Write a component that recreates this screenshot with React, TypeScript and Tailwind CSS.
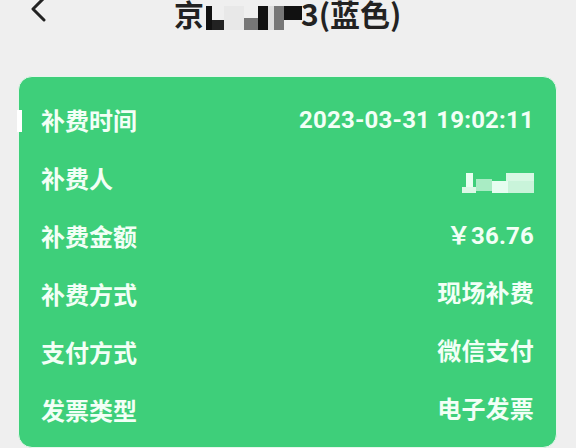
import React from 'react';

const rows: { label: string; value: React.ReactNode }[] = [
  { label: '补费时间', value: '2023-03-31 19:02:11' },
  { label: '补费人', value: null },
  { label: '补费金额', value: '￥36.76' },
  { label: '补费方式', value: '现场补费' },
  { label: '支付方式', value: '微信支付' },
  { label: '发票类型', value: '电子发票' },
];

// pixelated name mosaic in row 2
function NameMosaic() {
  return (
    <div className="flex items-end h-[30px]">
      <div className="flex flex-col items-start">
        <div className="w-[7px] h-[14px] bg-[#e8fff0] ml-[4px]" />
        <div className="w-[14px] h-[6px] bg-[#dcf8e6]" />
      </div>
      <div className="w-[16px] h-[12px] bg-[#a9ecc4] mb-[2px]" />
      <div className="flex flex-col">
        <div className="w-[28px] h-[8px] bg-[#d8f8e4] ml-[14px]" />
        <div className="flex">
          <div className="w-[16px] h-[12px] bg-[#e6fdf0]" />
          <div className="w-[26px] h-[12px] bg-[#c9f4da]" />
        </div>
      </div>
    </div>
  );
}

export default function App() {
  return (
    <div className="w-[576px] h-[448px] bg-[#efefef] overflow-hidden" style={{ fontFamily: 'Roboto, "Noto Sans CJK SC", sans-serif' }}>
      {/* Header */}
      <div className="h-[76px] flex items-start">
        <div className="w-[150px] pl-[28px] -mt-[2px]">
          <svg width="22" height="24" viewBox="0 0 22 24" fill="none">
            <polyline points="16,0 5,11 16,22" stroke="#222" strokeWidth="3" strokeLinecap="round" strokeLinejoin="round" />
          </svg>
        </div>
        <div className="flex items-center -mt-[7px] ml-[24px] text-[30px] leading-[40px] font-bold text-[#222]" style={{ fontFamily: '"Noto Sans CJK SC", sans-serif' }}>
          <span>京</span>
          <div className="flex items-end ml-[2px] h-[30px] mt-[4px]">
            <div className="w-[6px] h-[24px] bg-[#111]" />
            <div className="w-[12px] h-[10px] bg-[#222]" />
            <div className="w-[20px] h-[24px] bg-[#e8e8e8]" />
            <div className="w-[14px] h-[12px] bg-[#777]" />
            <div className="w-[10px] h-[24px] bg-[#111]" />
            <div className="w-[6px] h-[24px] bg-[#ddd]" />
            <div className="w-[10px] h-[24px] bg-[#777]" />
            <div className="w-[18px] h-[14px] bg-[#111] mb-[10px]" />
          </div>
          <span className="-ml-[1px]">3(蓝色)</span>
        </div>
      </div>

      {/* Card */}
      <div className="relative mx-[18px] w-[539px] rounded-[14px] border border-[#e6f6ec] bg-[#3ecf7a] pt-[14px] pb-[8px] pl-[22px] pr-[22px] text-[#f2fff6]">
        <div className="absolute -left-[2px] top-[33px] w-[5px] h-[22px] bg-white" />
        {rows.map((r) => (
          <div key={r.label} className="h-[58px] flex items-center justify-between">
            <span className="text-[24px] font-bold" style={{ fontFamily: '"Noto Sans CJK SC", sans-serif' }}>{r.label}</span>
            {r.value === null ? (
              <NameMosaic />
            ) : (
              <span className="text-[24px] font-bold tracking-[0.2px]">{r.value}</span>
            )}
          </div>
        ))}
      </div>
    </div>
  );
}
